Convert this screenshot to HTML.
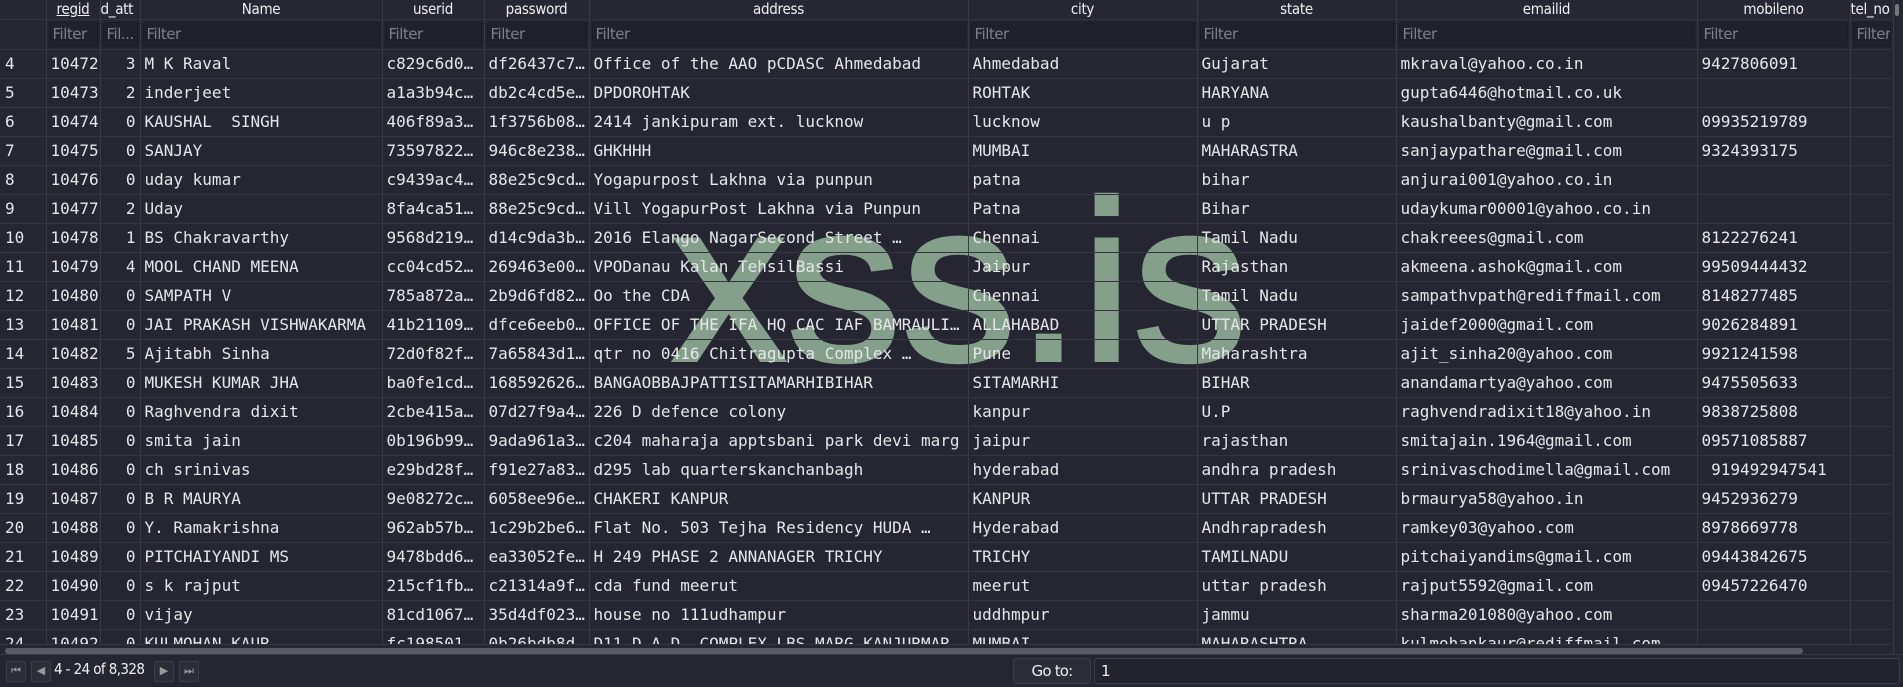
<!DOCTYPE html>
<html><head><meta charset="utf-8"><style>
*{margin:0;padding:0;box-sizing:border-box}
body{width:1903px;height:687px;background:#252631;overflow:hidden;position:relative;font-family:"DejaVu Sans Mono","Liberation Mono",monospace;color:#e6e6ea}
table{position:absolute;left:0;top:0;border-collapse:collapse;table-layout:fixed;width:1893px;z-index:2}
td,th{overflow:hidden;white-space:nowrap;border-right:1px solid #393a46;border-bottom:1px solid #333440}
th{height:19px;font:500 15px "DejaVu Sans","Liberation Sans",sans-serif;color:#f0f0f3;font-stretch:condensed;letter-spacing:-0.3px;background:#262732}
tr.f td{height:29px;padding:2px 2px}
tr.f td div{height:25px;border:1px solid #1b1c24;border-radius:3px;background:#20212b;color:#7e7f8a;font:15px "DejaVu Sans",sans-serif;letter-spacing:-0.5px;padding:2px 3px;line-height:19px;overflow:hidden}
tr.d td{height:29px;font-size:16px;padding:0 4px;line-height:28px}
td.n{padding-left:5px!important}
td.r{text-align:right}
u{text-decoration:underline}
.wm{position:absolute;left:672px;top:168px;font:228px "Liberation Sans",sans-serif;color:#84a08a;-webkit-text-stroke:4px #84a08a;letter-spacing:1px;line-height:1;z-index:1}
.hs{position:absolute;left:0;top:644px;width:1893px;height:10px;background:#252631;border-top:1px solid #333440;z-index:3}
.hs div{position:absolute;left:5px;top:3px;width:1798px;height:6px;background:#5a5b66;border-radius:3px}
.ft{position:absolute;left:0;top:654px;width:1903px;height:33px;background:#252631;border-top:1px solid #393a46;z-index:3}
.b{position:absolute;top:6px;width:20px;height:21px;border:1px solid #3c3d48;border-radius:2px;background:#2c2d38;color:#999;font:11px sans-serif;text-align:center;line-height:19px}
.pg{position:absolute;left:54px;top:5px;font:15px "DejaVu Sans",sans-serif;font-stretch:condensed;letter-spacing:-0.6px;color:#eee}
.go{position:absolute;left:1013px;top:3px;width:78px;height:26px;border:1px solid #3c3d48;border-radius:3px;background:#2c2d38;font:15px "DejaVu Sans",sans-serif;letter-spacing:-0.8px;text-align:center;line-height:24px;color:#eee}
.in{position:absolute;left:1094px;top:3px;width:806px;height:26px;border:1px solid #3c3d48;border-radius:3px;background:#22232d;font:15px "DejaVu Sans",sans-serif;padding-left:6px;line-height:24px;color:#eee}
.vs{position:absolute;left:1895px;top:4px;width:4px;height:12px;background:#777;border-radius:2px}
</style></head><body>
<table>
<colgroup><col style="width:46px"><col style="width:54px"><col style="width:40px"><col style="width:242px"><col style="width:102px"><col style="width:105px"><col style="width:379px"><col style="width:229px"><col style="width:199px"><col style="width:301px"><col style="width:153px"><col style="width:43px"></colgroup>
<tr><th></th><th><u>regid</u></th><th style="text-align:left">d_att</th><th>Name</th><th>userid</th><th>password</th><th>address</th><th>city</th><th>state</th><th>emailid</th><th>mobileno</th><th style="text-align:left">tel_no</th></tr>
<tr class="f"><td></td><td><div>Filter</div></td><td><div>Fil...</div></td><td><div>Filter</div></td><td><div>Filter</div></td><td><div>Filter</div></td><td><div>Filter</div></td><td><div>Filter</div></td><td><div>Filter</div></td><td><div>Filter</div></td><td><div>Filter</div></td><td><div>Filter</div></td></tr>
<tr class="d"><td class="n">4</td><td>10472</td><td class="r">3</td><td>M K Raval</td><td>c829c6d0…</td><td>df26437c7…</td><td>Office of the AAO pCDASC Ahmedabad</td><td>Ahmedabad</td><td>Gujarat</td><td>mkraval@yahoo.co.in</td><td>9427806091</td><td></td></tr>
<tr class="d"><td class="n">5</td><td>10473</td><td class="r">2</td><td>inderjeet</td><td>a1a3b94c…</td><td>db2c4cd5e…</td><td>DPDOROHTAK</td><td>ROHTAK</td><td>HARYANA</td><td>gupta6446@hotmail.co.uk</td><td></td><td></td></tr>
<tr class="d"><td class="n">6</td><td>10474</td><td class="r">0</td><td>KAUSHAL&nbsp;&nbsp;SINGH</td><td>406f89a3…</td><td>1f3756b08…</td><td>2414 jankipuram ext. lucknow</td><td>lucknow</td><td>u p</td><td>kaushalbanty@gmail.com</td><td>09935219789</td><td></td></tr>
<tr class="d"><td class="n">7</td><td>10475</td><td class="r">0</td><td>SANJAY</td><td>73597822…</td><td>946c8e238…</td><td>GHKHHH</td><td>MUMBAI</td><td>MAHARASTRA</td><td>sanjaypathare@gmail.com</td><td>9324393175</td><td></td></tr>
<tr class="d"><td class="n">8</td><td>10476</td><td class="r">0</td><td>uday kumar</td><td>c9439ac4…</td><td>88e25c9cd…</td><td>Yogapurpost Lakhna via punpun</td><td>patna</td><td>bihar</td><td>anjurai001@yahoo.co.in</td><td></td><td></td></tr>
<tr class="d"><td class="n">9</td><td>10477</td><td class="r">2</td><td>Uday</td><td>8fa4ca51…</td><td>88e25c9cd…</td><td>Vill YogapurPost Lakhna via Punpun</td><td>Patna</td><td>Bihar</td><td>udaykumar00001@yahoo.co.in</td><td></td><td></td></tr>
<tr class="d"><td class="n">10</td><td>10478</td><td class="r">1</td><td>BS Chakravarthy</td><td>9568d219…</td><td>d14c9da3b…</td><td>2016 Elango NagarSecond Street …</td><td>Chennai</td><td>Tamil Nadu</td><td>chakreees@gmail.com</td><td>8122276241</td><td></td></tr>
<tr class="d"><td class="n">11</td><td>10479</td><td class="r">4</td><td>MOOL CHAND MEENA</td><td>cc04cd52…</td><td>269463e00…</td><td>VPODanau Kalan TehsilBassi</td><td>Jaipur</td><td>Rajasthan</td><td>akmeena.ashok@gmail.com</td><td>99509444432</td><td></td></tr>
<tr class="d"><td class="n">12</td><td>10480</td><td class="r">0</td><td>SAMPATH V</td><td>785a872a…</td><td>2b9d6fd82…</td><td>Oo the CDA</td><td>Chennai</td><td>Tamil Nadu</td><td>sampathvpath@rediffmail.com</td><td>8148277485</td><td></td></tr>
<tr class="d"><td class="n">13</td><td>10481</td><td class="r">0</td><td>JAI PRAKASH VISHWAKARMA</td><td>41b21109…</td><td>dfce6eeb0…</td><td>OFFICE OF THE IFA HQ CAC IAF BAMRAULI…</td><td>ALLAHABAD</td><td>UTTAR PRADESH</td><td>jaidef2000@gmail.com</td><td>9026284891</td><td></td></tr>
<tr class="d"><td class="n">14</td><td>10482</td><td class="r">5</td><td>Ajitabh Sinha</td><td>72d0f82f…</td><td>7a65843d1…</td><td>qtr no 0416 Chitragupta Complex …</td><td>Pune</td><td>Maharashtra</td><td>ajit_sinha20@yahoo.com</td><td>9921241598</td><td></td></tr>
<tr class="d"><td class="n">15</td><td>10483</td><td class="r">0</td><td>MUKESH KUMAR JHA</td><td>ba0fe1cd…</td><td>168592626…</td><td>BANGAOBBAJPATTISITAMARHIBIHAR</td><td>SITAMARHI</td><td>BIHAR</td><td>anandamartya@yahoo.com</td><td>9475505633</td><td></td></tr>
<tr class="d"><td class="n">16</td><td>10484</td><td class="r">0</td><td>Raghvendra dixit</td><td>2cbe415a…</td><td>07d27f9a4…</td><td>226 D defence colony</td><td>kanpur</td><td>U.P</td><td>raghvendradixit18@yahoo.in</td><td>9838725808</td><td></td></tr>
<tr class="d"><td class="n">17</td><td>10485</td><td class="r">0</td><td>smita jain</td><td>0b196b99…</td><td>9ada961a3…</td><td>c204 maharaja apptsbani park devi marg</td><td>jaipur</td><td>rajasthan</td><td>smitajain.1964@gmail.com</td><td>09571085887</td><td></td></tr>
<tr class="d"><td class="n">18</td><td>10486</td><td class="r">0</td><td>ch srinivas</td><td>e29bd28f…</td><td>f91e27a83…</td><td>d295 lab quarterskanchanbagh</td><td>hyderabad</td><td>andhra pradesh</td><td>srinivaschodimella@gmail.com</td><td>&nbsp;919492947541</td><td></td></tr>
<tr class="d"><td class="n">19</td><td>10487</td><td class="r">0</td><td>B R MAURYA</td><td>9e08272c…</td><td>6058ee96e…</td><td>CHAKERI KANPUR</td><td>KANPUR</td><td>UTTAR PRADESH</td><td>brmaurya58@yahoo.in</td><td>9452936279</td><td></td></tr>
<tr class="d"><td class="n">20</td><td>10488</td><td class="r">0</td><td>Y. Ramakrishna</td><td>962ab57b…</td><td>1c29b2be6…</td><td>Flat No. 503 Tejha Residency HUDA …</td><td>Hyderabad</td><td>Andhrapradesh</td><td>ramkey03@yahoo.com</td><td>8978669778</td><td></td></tr>
<tr class="d"><td class="n">21</td><td>10489</td><td class="r">0</td><td>PITCHAIYANDI MS</td><td>9478bdd6…</td><td>ea33052fe…</td><td>H 249 PHASE 2 ANNANAGER TRICHY</td><td>TRICHY</td><td>TAMILNADU</td><td>pitchaiyandims@gmail.com</td><td>09443842675</td><td></td></tr>
<tr class="d"><td class="n">22</td><td>10490</td><td class="r">0</td><td>s k rajput</td><td>215cf1fb…</td><td>c21314a9f…</td><td>cda fund meerut</td><td>meerut</td><td>uttar pradesh</td><td>rajput5592@gmail.com</td><td>09457226470</td><td></td></tr>
<tr class="d"><td class="n">23</td><td>10491</td><td class="r">0</td><td>vijay</td><td>81cd1067…</td><td>35d4df023…</td><td>house no 111udhampur</td><td>uddhmpur</td><td>jammu</td><td>sharma201080@yahoo.com</td><td></td><td></td></tr>
<tr class="d"><td class="n">24</td><td>10492</td><td class="r">0</td><td>KULMOHAN KAUR</td><td>fc198501…</td><td>0b26bdb8d…</td><td>D11 D.A.D. COMPLEX LBS MARG KANJURMAR…</td><td>MUMBAI</td><td>MAHARASHTRA</td><td>kulmohankaur@rediffmail.com</td><td></td><td></td></tr>
</table>
<div class="wm">xss.is</div>
<div class="vs"></div>
<div class="hs"><div></div></div>
<div class="ft">
<div class="b" style="left:6px">⏮</div><div class="b" style="left:31px">◀</div>
<div class="pg">4 - 24 of 8,328</div>
<div class="b" style="left:154px">▶</div><div class="b" style="left:179px">⏭</div>
<div class="go">Go to:</div><div class="in">1</div>
</div>
</body></html>
